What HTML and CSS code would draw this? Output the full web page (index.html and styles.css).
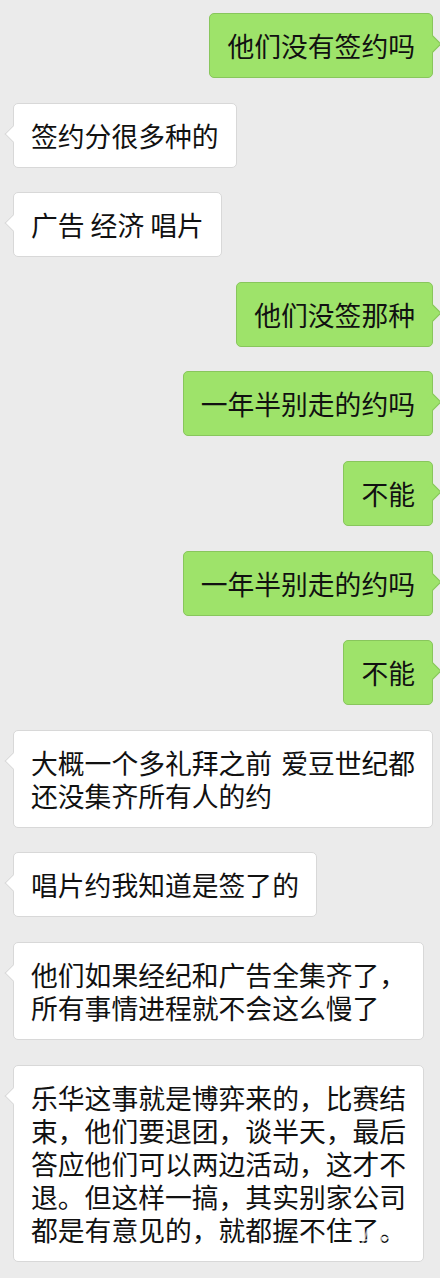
FILE: index.html
```html
<!DOCTYPE html>
<html lang="zh-CN">
<head>
    <meta charset="UTF-8">
    <meta name="viewport" content="width=device-width, initial-scale=1.0">
    <title>聊天记录</title>
    <link rel="stylesheet" href="styles.css">
</head>
<body>

<div class="chat">
    <div class="msg me">他们没有签约吗</div>
    <div class="msg other">签约分很多种的</div>
    <div class="msg other">广告 经济 唱片</div>
    <div class="msg me">他们没签那种</div>
    <div class="msg me">一年半别走的约吗</div>
    <div class="msg me">不能</div>
    <div class="msg me">一年半别走的约吗</div>
    <div class="msg me">不能</div>
    <div class="msg other wide">大概一个多礼拜之前 爱豆世纪都<br>还没集齐所有人的约</div>
    <div class="msg other">唱片约我知道是签了的</div>
    <div class="msg other">他们如果经纪和广告全集齐了，<br>所有事情进程就不会这么慢了</div>
    <div class="msg other">乐华这事就是博弈来的，比赛结<br>束，他们要退团，谈半天，最后<br>答应他们可以两边活动，这才不<br>退。但这样一搞，其实别家公司<br>都是有意见的，就都握不住了。</div>
</div>

<!-- 水印 -->
<div class="watermark">APP</div>

</body>
</html>
```

FILE: styles.css
```css
body {
    margin: 0;
    background-color: #ebebeb;
    font-family: "Noto Sans CJK SC", "Noto Sans", sans-serif;
    color: #111;
}
.chat {
    display: flex;
    flex-direction: column;
    gap: 24.6px;
    padding: 13px 7px 16px 13px;
}
.msg {
    position: relative;
    font-size: 26.8px;
    line-height: 33px;
    padding: 15px 17px;
    border-radius: 5px;
    white-space: nowrap;
}
.wide {
    word-spacing: 3px;
}
.msg::before {
    content: "";
    position: absolute;
    top: 24px;
    width: 11px;
    height: 11px;
    transform: rotate(45deg);
}
.me {
    align-self: flex-end;
    background-color: #9ee36a;
    border: 1px solid #88c65c;
}
.me::before {
    right: -7px;
    background-color: #9ee36a;
    border-top: 1px solid #88c65c;
    border-right: 1px solid #88c65c;
}
.other {
    align-self: flex-start;
    background-color: #fff;
    border: 1px solid #d8d8d8;
}
.other::before {
    left: -7px;
    background-color: #fff;
    border-left: 1px solid #d8d8d8;
    border-bottom: 1px solid #d8d8d8;
}
.watermark {
    position: absolute;
    left: 360px;
    top: 1222px;
    font-family: "Liberation Sans", sans-serif;
    font-size: 26px;
    color: rgba(255, 255, 255, 0.6);
}
```
